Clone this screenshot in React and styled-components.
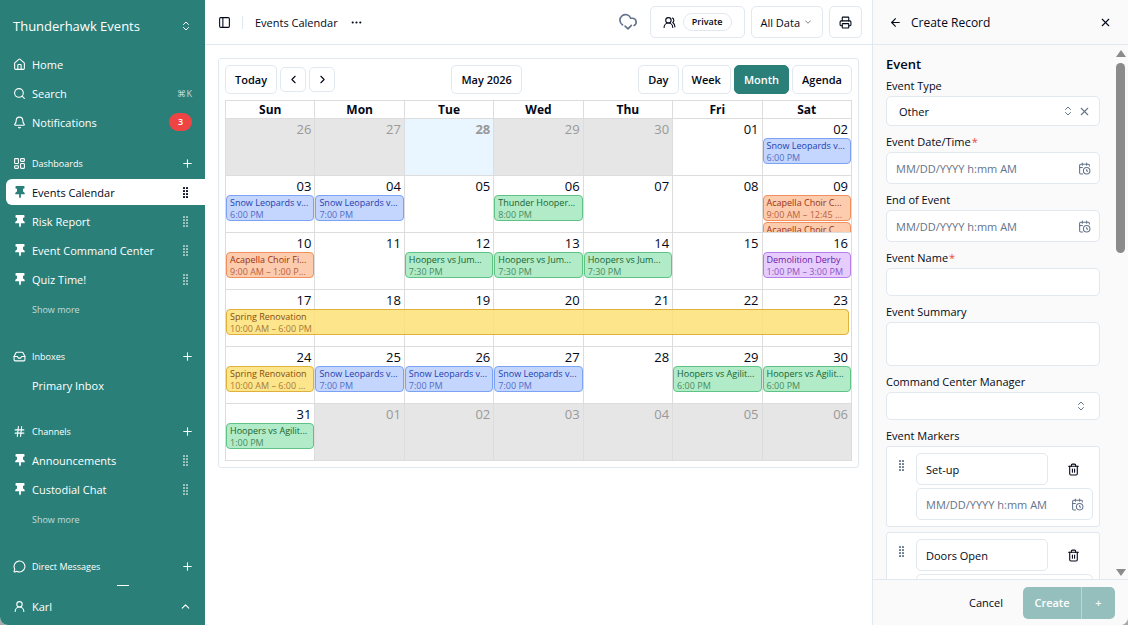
import React from 'react';
import styled, { createGlobalStyle, css } from 'styled-components';
import {
  ArrowLeft, Bell, CalendarClock, ChevronDown, ChevronLeft, ChevronRight, ChevronUp,
  ChevronsUpDown, Ellipsis, Hash, House, Inbox, LayoutDashboard, MessageCircle,
  PanelLeft, Plus, Printer, Search, Trash2, UserRound, UsersRound, X,
} from 'lucide-react';

const COLORS = {
  blue: { bg: 'rgba(191, 211, 253, 0.92)', line: '#7ba2f3', text: '#1e40af' },
  green: { bg: 'rgba(172, 234, 196, 0.94)', line: '#5fc386', text: '#166534' },
  orange: { bg: 'rgba(253, 200, 168, 0.94)', line: '#f0905c', text: '#9a3412' },
  purple: { bg: 'rgba(229, 202, 254, 0.94)', line: '#b57eea', text: '#6b21a8' },
  yellow: { bg: 'rgba(253, 224, 120, 0.85)', line: '#dfb03c', text: '#854d0e' },
};

const DAYS = ['Sun', 'Mon', 'Tue', 'Wed', 'Thu', 'Fri', 'Sat'];

const snow = (time) => ({ title: 'Snow Leopards v...', time, color: 'blue' });
const jump = { title: 'Hoopers vs Jum...', time: '7:30 PM', color: 'green' };
const agility = (time) => ({ title: 'Hoopers vs Agilit...', time, color: 'green' });
const choir = (title, time) => ({ title, time, color: 'orange' });

const WEEKS = [
  [
    { day: '26', off: true }, { day: '27', off: true }, { day: '28', off: true, today: true },
    { day: '29', off: true }, { day: '30', off: true }, { day: '01' },
    { day: '02', events: [snow('6:00 PM')] },
  ],
  [
    { day: '03', events: [snow('6:00 PM')] },
    { day: '04', events: [snow('7:00 PM')] },
    { day: '05' },
    { day: '06', events: [{ title: 'Thunder Hooper...', time: '8:00 PM', color: 'green' }] },
    { day: '07' }, { day: '08' },
    {
      day: '09',
      events: [
        choir('Acapella Choir C...', '9:00 AM – 12:45 ...'),
        choir('Acapella Choir C...'),
      ],
    },
  ],
  [
    { day: '10', events: [choir('Acapella Choir Fi...', '9:00 AM – 1:00 P...')] },
    { day: '11' },
    { day: '12', events: [jump] }, { day: '13', events: [jump] }, { day: '14', events: [jump] },
    { day: '15' },
    { day: '16', events: [{ title: 'Demolition Derby', time: '1:00 PM – 3:00 PM', color: 'purple' }] },
  ],
  [
    { day: '17', events: [{ title: 'Spring Renovation', time: '10:00 AM – 6:00 PM', color: 'yellow', wide: true }] },
    { day: '18' }, { day: '19' }, { day: '20' }, { day: '21' }, { day: '22' }, { day: '23' },
  ],
  [
    { day: '24', events: [{ title: 'Spring Renovation', time: '10:00 AM – 6:00 ...', color: 'yellow' }] },
    { day: '25', events: [snow('7:00 PM')] },
    { day: '26', events: [snow('7:00 PM')] },
    { day: '27', events: [snow('7:00 PM')] },
    { day: '28' },
    { day: '29', events: [agility('6:00 PM')] },
    { day: '30', events: [agility('6:00 PM')] },
  ],
  [
    { day: '31', events: [agility('1:00 PM')] },
    { day: '01', off: true }, { day: '02', off: true }, { day: '03', off: true },
    { day: '04', off: true }, { day: '05', off: true }, { day: '06', off: true },
  ],
];

const Pin = () => (
  <svg width="13" height="14" viewBox="0 0 13 14" fill="currentColor" aria-hidden="true">
    <path d="M3.300 1h7.400a.8.8 0 0 1 .8.8v1.200a.8.8 0 0 1-.8.8h-.7v2.700c1.200.4 1.800 1.200 1.800 2.700H7.900V12L7 13.500 6.100 12V9.200H2.200c0-1.500.6-2.300 1.800-2.700V3.800h-.7a.8.8 0 0 1-.8-.8V1.800a.8.8 0 0 1 .8-.8z" />
  </svg>
);

const Grip = () => (
  <svg width="6" height="11" viewBox="0 0 6 11" fill="currentColor" aria-hidden="true">
    {[0, 3, 6, 9].map((y) => (
      <React.Fragment key={y}>
        <rect x="0" y={y} width="2" height="2" rx=".4" />
        <rect x="3" y={y} width="2" height="2" rx=".4" />
      </React.Fragment>
    ))}
  </svg>
);

const CloudSaved = () => (
  <svg width="20" height="20" viewBox="0 0 24 24" fill="none" stroke="currentColor" strokeWidth="2" strokeLinecap="round" strokeLinejoin="round" aria-hidden="true">
    <path d="M5.500 15.500A6.700 6.700 0 1 1 15.300 7.500h2a4.600 4.600 0 0 1 2 8.700" />
    <path d="m8.500 17 3.500 3.300 4-4.300" />
  </svg>
);

const Section = ({ icon: Icon, label }) => (
  <SectionRow>
    <Icon size={13} />
    <SectionName>{label}</SectionName>
    <BareButton aria-label={`Add to ${label}`}><Plus size={13} /></BareButton>
  </SectionRow>
);

const Pinned = ({ label, active }) => (
  <NavRow href="#" $active={active}>
    <Pin />
    <NavName>{label}</NavName>
    <GripBox $active={active}><Grip /></GripBox>
  </NavRow>
);

const DateField = ({ id, label, required }) => (
  <>
    {label && <Label htmlFor={id}>{label}{required && <Star>*</Star>}</Label>}
    <Control>
      <TextInput id={id} placeholder="MM/DD/YYYY h:mm AM" aria-label={label ? undefined : 'Marker time'} />
      <Trail><CalendarClock size={13} /></Trail>
    </Control>
  </>
);

const Marker = ({ id, name }) => (
  <MarkerCard>
    <MarkerGrip><Grip /></MarkerGrip>
    <MarkerFields>
      <MarkerTop>
        <TextInput id={id} aria-label="Marker name" defaultValue={name} />
        <BareButton aria-label={`Delete ${name}`}><Trash2 size={13} /></BareButton>
      </MarkerTop>
      <DateField id={`${id}-time`} />
    </MarkerFields>
  </MarkerCard>
);

const App = () => {
  return (
    <Shell>
      <GlobalStyle />
      <Sidebar>
        <Workspace>
          Thunderhawk Events
          <ChevronsUpDown size={12} />
        </Workspace>
        <NavScroll>
          <Nav $tight>
            <NavRow href="#"><House size={13} /><NavName>Home</NavName></NavRow>
            <NavRow href="#"><Search size={13} /><NavName>Search</NavName><Shortcut>⌘K</Shortcut></NavRow>
            <NavRow href="#"><Bell size={13} /><NavName>Notifications</NavName><Badge>3</Badge></NavRow>
          </Nav>
          <Nav>
            <Section icon={LayoutDashboard} label="Dashboards" />
            <Pinned label="Events Calendar" active />
            <Pinned label="Risk Report" />
            <Pinned label="Event Command Center" />
            <Pinned label="Quiz Time!" />
            <ShowMore>Show more</ShowMore>
          </Nav>
          <Nav>
            <Section icon={Inbox} label="Inboxes" />
            <NavRow href="#" $indent><NavName>Primary Inbox</NavName></NavRow>
          </Nav>
          <Nav>
            <Section icon={Hash} label="Channels" />
            <Pinned label="Announcements" />
            <Pinned label="Custodial Chat" />
            <ShowMore>Show more</ShowMore>
          </Nav>
          <Nav>
            <Section icon={MessageCircle} label="Direct Messages" />
            <Peek />
          </Nav>
        </NavScroll>
        <Account>
          <UserRound size={13} />
          <NavName>Karl</NavName>
          <ChevronUp size={13} />
        </Account>
      </Sidebar>

      <Main>
        <TopBar>
          <BareButton aria-label="Toggle sidebar"><PanelLeft size={13} /></BareButton>
          <Divider />
          <Crumb>Events Calendar</Crumb>
          <BareButton aria-label="More"><Ellipsis size={13} /></BareButton>
          <TopActions>
            <Cloud><CloudSaved /></Cloud>
            <TopButton><UsersRound size={13} /><Pill>Private</Pill></TopButton>
            <TopButton $soft>All Data<ChevronDown size={10} /></TopButton>
            <TopButton $icon aria-label="Print"><Printer size={13} /></TopButton>
          </TopActions>
        </TopBar>
        <Calendar>
          <Toolbar>
            <Group>
              <ToolButton>Today</ToolButton>
              <ArrowButton aria-label="Previous"><ChevronLeft size={13} /></ArrowButton>
              <ArrowButton aria-label="Next"><ChevronRight size={13} /></ArrowButton>
            </Group>
            <ToolButton>May 2026</ToolButton>
            <Group>
              <ToolButton>Day</ToolButton>
              <ToolButton>Week</ToolButton>
              <ToolButton $active>Month</ToolButton>
              <ToolButton>Agenda</ToolButton>
            </Group>
          </Toolbar>
          <Month>
            <thead>
              <tr>{DAYS.map((d) => <DayName key={d}>{d}</DayName>)}</tr>
            </thead>
            <tbody>
              {WEEKS.map((week, i) => (
                <tr key={i}>
                  {week.map((cell) => (
                    <DayCell key={cell.day} $off={cell.off} $today={cell.today}>
                      <DayBody>
                        <DayNumber>{cell.day}</DayNumber>
                        {(cell.events || []).map((e, n) => (
                          <EventChip key={n} $color={COLORS[e.color]} $wide={e.wide}>
                            <span>{e.title}</span>
                            {e.time && <EventTime>{e.time}</EventTime>}
                          </EventChip>
                        ))}
                      </DayBody>
                    </DayCell>
                  ))}
                </tr>
              ))}
            </tbody>
          </Month>
        </Calendar>
      </Main>

      <Panel>
        <PanelHead>
          <BareButton aria-label="Back"><ArrowLeft size={13} /></BareButton>
          <PanelTitle>Create Record</PanelTitle>
          <BareButton aria-label="Close"><X size={13} /></BareButton>
        </PanelHead>
        <PanelScroll>
          <Form>
            <FormTitle>Event</FormTitle>
            <Field>
              <Label htmlFor="type">Event Type</Label>
              <Control>
                <Select id="type" defaultValue="Other"><option>Other</option></Select>
                <Trail><ChevronsUpDown size={12} /><X size={13} /></Trail>
              </Control>
            </Field>
            <Field><DateField id="start" label="Event Date/Time" required /></Field>
            <Field><DateField id="end" label="End of Event" /></Field>
            <Field>
              <Label htmlFor="name">Event Name<Star>*</Star></Label>
              <TextInput id="name" $short />
            </Field>
            <Field>
              <Label htmlFor="summary">Event Summary</Label>
              <TextArea id="summary" />
            </Field>
            <Field>
              <Label htmlFor="manager">Command Center Manager</Label>
              <Control>
                <Select id="manager" $short />
                <Trail $inset><ChevronsUpDown size={12} /></Trail>
              </Control>
            </Field>
            <Field>
              <Label as="span">Event Markers</Label>
              <Markers>
                <Marker id="setup" name="Set-up" />
                <Marker id="doors" name="Doors Open" />
              </Markers>
            </Field>
          </Form>
          <ScrollBar aria-hidden="true">
            <ScrollArrow />
            <ScrollTrack><ScrollThumb /></ScrollTrack>
            <ScrollArrow $down />
          </ScrollBar>
        </PanelScroll>
        <PanelFoot>
          <CancelButton>Cancel</CancelButton>
          <Split>
            <CreateButton>Create</CreateButton>
            <CreateButton $more aria-label="Create and add another">+</CreateButton>
          </Split>
        </PanelFoot>
      </Panel>
    </Shell>
  );
};

const GlobalStyle = createGlobalStyle`
* { box-sizing: border-box; }
body {
  margin: 0;
  background: #a9a9a9;
  color: #020817;
  font-family: "Open Sans", "Noto Sans", sans-serif;
  font-size: 11px;
  overflow: hidden;
}
button, input, select, textarea { font: inherit; color: inherit; }
button { cursor: pointer; }
svg { flex: none; display: block; }
`;

const Shell = styled.div`
  display: flex;
  height: 100vh;
  overflow: hidden;
  background: #fff;
  border-radius: 0 0 8px 8px;
`;

const BareButton = styled.button`
  display: flex;
  padding: 0;
  border: 0;
  background: none;
`;

/* sidebar */

const Sidebar = styled.aside`
  display: flex;
  flex-direction: column;
  flex: none;
  width: 205px;
  background: #2a8079;
  color: #fff;
`;

const Workspace = styled.div`
  display: flex;
  align-items: center;
  justify-content: space-between;
  flex: none;
  height: 51px;
  padding: 0 13px;
  font-size: 13px;
`;

const NavScroll = styled.div`
  flex: 1;
  min-height: 0;
  overflow: hidden;
`;

const Nav = styled.nav`
  display: flex;
  flex-direction: column;
  gap: 3px;
  margin-bottom: ${(p) => (p.$tight ? 15 : 20)}px;
  padding-left: 6px;
`;

const NavRow = styled.a`
  display: flex;
  align-items: center;
  gap: 6px;
  height: 26px;
  padding: 0 13px 0 ${(p) => (p.$indent ? 26 : 7)}px;
  border-radius: 6px 0 0 6px;
  color: inherit;
  text-decoration: none;
  ${(p) => p.$active && css`
    background: #fff;
    color: #020817;
    & > svg { color: #2a8079; }
  `}
`;

const NavName = styled.span`
  flex: 1;
  white-space: nowrap;
`;

const SectionRow = styled.div`
  display: flex;
  align-items: center;
  gap: 6px;
  height: 26px;
  padding: 0 11px 0 7px;
  font-size: 9px;
  font-weight: 500;
`;

const SectionName = styled.span`
  flex: 1;
`;

const Shortcut = styled.span`
  font-size: 9px;
  opacity: 0.7;
`;

const Badge = styled.span`
  width: 23px;
  height: 18px;
  border-radius: 9px;
  background: #ef4444;
  font-size: 9px;
  font-weight: 600;
  line-height: 18px;
  text-align: center;
`;

const GripBox = styled.span`
  padding-right: 3px;
  opacity: ${(p) => (p.$active ? 1 : 0.6)};
`;

const ShowMore = styled.button`
  height: 28px;
  padding: 0 0 0 26px;
  border: 0;
  background: none;
  font-size: 9px;
  text-align: left;
  opacity: 0.7;
`;

const Peek = styled.div`
  align-self: center;
  width: 12px;
  height: 1px;
  margin: 3px 0 0 34px;
  background: #fff;
`;

const Account = styled.div`
  display: flex;
  align-items: center;
  flex: none;
  gap: 6px;
  height: 38px;
  padding: 0 13px;
`;

/* main column */

const Main = styled.main`
  flex: 1;
  min-width: 0;
`;

const TopBar = styled.header`
  display: flex;
  align-items: center;
  height: 45px;
  padding: 0 10px 0 13px;
  border-bottom: 1px solid #e2e8f0;
`;

const Divider = styled.span`
  width: 1px;
  height: 13px;
  margin: 0 12px 0 11px;
  background: #e2e8f0;
`;

const Crumb = styled.span`
  margin-right: 12px;
`;

const TopActions = styled.div`
  display: flex;
  align-items: center;
  gap: 6px;
  margin-left: auto;
`;

const Cloud = styled.span`
  margin-right: 6px;
  color: #64748b;
`;

const TopButton = styled.button`
  display: flex;
  align-items: center;
  gap: ${(p) => (p.$soft ? 3 : 7)}px;
  height: 32px;
  padding: 0 ${(p) => (p.$soft || p.$icon ? 9 : 12)}px;
  border: 1px solid #e2e8f0;
  border-radius: 5px;
  background: #fff;
  & > svg { opacity: ${(p) => (p.$soft ? 0.6 : 1)}; }
`;

const Pill = styled.span`
  padding: 0 8px;
  border: 1px solid #e2e8f0;
  border-radius: 9px;
  font-size: 9px;
  font-weight: 600;
  line-height: 16px;
`;

const Calendar = styled.section`
  margin: 13px;
  padding: 6px;
  border: 1px solid #e2e8f0;
  border-radius: 3px;
`;

const Toolbar = styled.div`
  display: flex;
  align-items: center;
  justify-content: space-between;
  margin-bottom: 6px;
`;

const Group = styled.div`
  display: flex;
  align-items: center;
  gap: 3px;
`;

const ToolButton = styled.button`
  height: 29px;
  padding: 0 9px;
  border: 1px solid ${(p) => (p.$active ? '#2a8079' : '#e2e8f0')};
  border-radius: 5px;
  background: ${(p) => (p.$active ? '#2a8079' : '#fff')};
  color: ${(p) => (p.$active ? '#fff' : '#020817')};
  font-weight: 600;
`;

const ArrowButton = styled.button`
  display: grid;
  place-items: center;
  width: 26px;
  height: 25px;
  padding: 0;
  border: 1px solid #e2e8f0;
  border-radius: 5px;
  background: #fff;
`;

const Month = styled.table`
  width: 100%;
  table-layout: fixed;
  border-collapse: collapse;
`;

const DayName = styled.th`
  height: 18px;
  padding: 0;
  border: 1px solid #ddd;
  font-size: 12px;
  font-weight: 700;
  line-height: 17px;
`;

const DayCell = styled.td`
  height: 57px;
  padding: 0;
  border: 1px solid #ddd;
  vertical-align: top;
  background: ${(p) => (p.$today ? '#eaf6ff' : p.$off ? '#e6e6e6' : 'transparent')};
  color: ${(p) => (p.$off ? '#999' : '#020817')};
  font-weight: ${(p) => (p.$today ? 700 : 400)};
`;

const DayBody = styled.div`
  height: 56px;
  clip-path: inset(0 -700% 0 -1px);
`;

const DayNumber = styled.div`
  height: 19px;
  padding-right: 3px;
  font-size: 13px;
  line-height: 20px;
  text-align: right;
`;

const EventChip = styled.button`
  display: flex;
  flex-direction: column;
  align-items: flex-start;
  justify-content: flex-start;
  position: relative;
  z-index: 1;
  width: ${(p) => (p.$wide ? 'calc(700% + 4px)' : '100%')};
  height: 26px;
  margin: 0 0 1px;
  padding: 1px 3px 0;
  border: 1px solid ${(p) => p.$color.line};
  border-radius: 4px;
  background: ${(p) => p.$color.bg};
  color: ${(p) => p.$color.text};
  font-size: 9px;
  line-height: 12px;
  white-space: nowrap;
`;

const EventTime = styled.span`
  opacity: 0.7;
`;

/* record panel */

const Panel = styled.aside`
  display: flex;
  flex-direction: column;
  flex: none;
  width: 256px;
  border-left: 1px solid #e2e8f0;
  background: #fafafa;
`;

const PanelHead = styled.div`
  display: flex;
  align-items: center;
  flex: none;
  gap: 9px;
  height: 45px;
  padding: 0 16px;
  border-bottom: 1px solid #e2e8f0;
`;

const PanelTitle = styled.span`
  flex: 1;
  font-size: 12px;
`;

const PanelScroll = styled.div`
  display: flex;
  flex: 1;
  min-height: 0;
  overflow: hidden;
`;

const Form = styled.form`
  flex: 1;
  padding: 7px 13px 0;
`;

const FormTitle = styled.h2`
  margin: 0;
  font-size: 13px;
  font-weight: 600;
  line-height: 24px;
`;

const Field = styled.div`
  display: flex;
  flex-direction: column;
  margin-bottom: 6px;
`;

const Label = styled.label`
  font-weight: 500;
  line-height: 20px;
`;

const Star = styled.span`
  margin-left: 1px;
  color: #ef4444;
  font-weight: 400;
`;

const Control = styled.div`
  position: relative;
`;

const box = css`
  display: block;
  width: 100%;
  border: 1px solid #e2e8f0;
  border-radius: 5px;
  background: #fff;
  outline: none;
`;

const TextInput = styled.input`
  ${box}
  height: ${(p) => (p.$short ? 28 : 32)}px;
  padding: 0 9px;
  &::placeholder { color: #64748b; opacity: 1; }
`;

const TextArea = styled.textarea`
  ${box}
  height: 44px;
  resize: none;
`;

const Select = styled.select`
  ${box}
  height: ${(p) => (p.$short ? 28 : 30)}px;
  padding: 0 12px;
  appearance: none;
  font-weight: 500;
`;

const Trail = styled.span`
  display: flex;
  align-items: center;
  gap: 4px;
  position: absolute;
  top: 0;
  bottom: 0;
  right: ${(p) => (p.$inset ? 13 : 9)}px;
  color: #64748b;
  pointer-events: none;
`;

const Markers = styled.div`
  display: flex;
  flex-direction: column;
  gap: 5px;
`;

const MarkerCard = styled.div`
  display: flex;
  padding: 6px;
  border: 1px solid #e2e8f0;
  border-radius: 3px;
  background: #fff;
`;

const MarkerGrip = styled.span`
  width: 23px;
  padding: 7px 0 0 6px;
  color: #64748b;
`;

const MarkerFields = styled.div`
  flex: 1;
  display: flex;
  flex-direction: column;
  gap: 3px;
`;

const MarkerTop = styled.div`
  display: grid;
  grid-template-columns: 1fr 40px;
  gap: 5px;
  align-items: center;
  justify-items: center;
`;

const ScrollBar = styled.div`
  display: flex;
  flex-direction: column;
  align-items: center;
  width: 15px;
  padding: 5px 1px 3px;
`;

const ScrollArrow = styled.span`
  border: 5px solid transparent;
  border-top-width: ${(p) => (p.$down ? 7 : 0)}px;
  border-bottom-width: ${(p) => (p.$down ? 0 : 7)}px;
  border-top-color: ${(p) => (p.$down ? '#8b8b8b' : 'transparent')};
  border-bottom-color: ${(p) => (p.$down ? 'transparent' : '#8b8b8b')};
`;

const ScrollTrack = styled.div`
  flex: 1;
  padding: 6px 0;
`;

const ScrollThumb = styled.div`
  width: 9px;
  height: 38%;
  border-radius: 5px;
  background: #8b8b8b;
`;

const PanelFoot = styled.div`
  display: flex;
  align-items: center;
  justify-content: flex-end;
  flex: none;
  gap: 20px;
  height: 46px;
  padding: 0 13px;
  border-top: 1px solid #e2e8f0;
`;

const CancelButton = styled.button`
  padding: 0;
  border: 0;
  background: none;
  font-weight: 500;
`;

const Split = styled.div`
  display: flex;
  overflow: hidden;
  border-radius: 5px;
`;

const CreateButton = styled.button`
  width: ${(p) => (p.$more ? 34 : 58)}px;
  height: 32px;
  padding: 0;
  border: 0;
  border-left: ${(p) => (p.$more ? '1px solid #bcd6d3' : '0')};
  background: #94bfbc;
  color: #fff;
  font-weight: 600;
`;

export default App;
